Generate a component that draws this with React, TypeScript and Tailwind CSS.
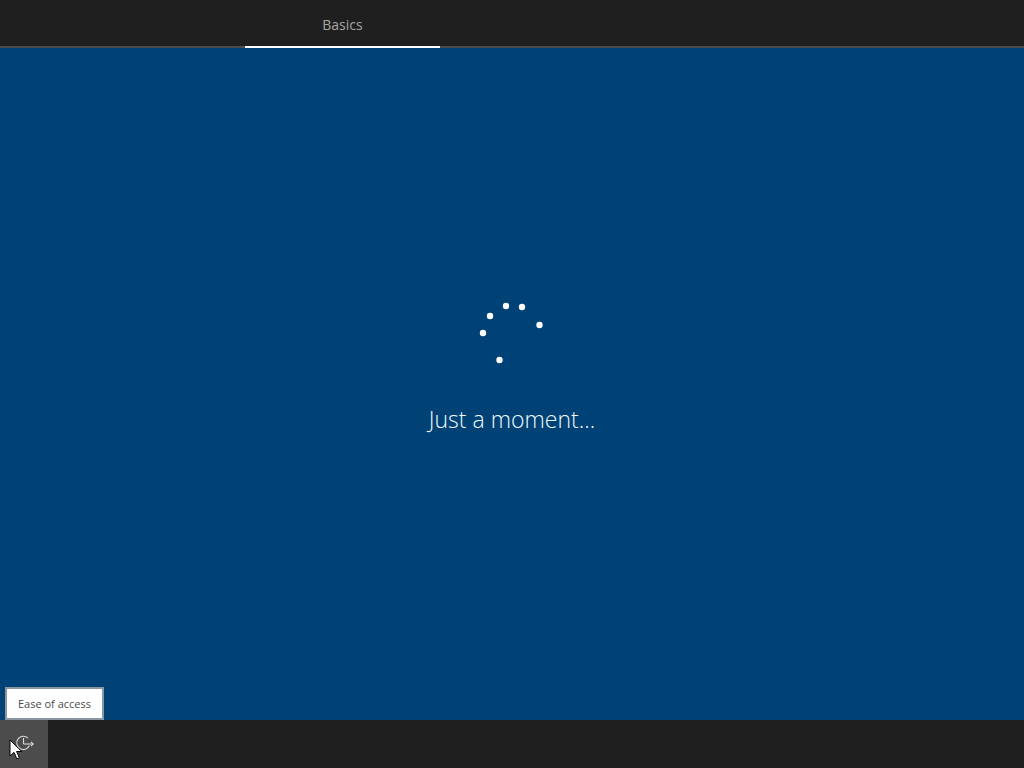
// App.tsx
import React from "react";

const dots = [
  [506, 306],
  [522, 307],
  [539.5, 325],
  [490, 316],
  [483, 333],
  [499.5, 360],
];

const Spinner: React.FC = () => {
  return (
    <svg width="80" height="70" viewBox="472 298 80 70" className="block">
      {dots.map(([cx, cy]) => (
        <circle key={`${cx}-${cy}`} cx={cx} cy={cy} r="3.2" fill="#ffffff" />
      ))}
    </svg>
  );
};

const EaseIcon: React.FC = () => {
  return (
    <svg width="24" height="20" viewBox="0 0 24 20" fill="none" stroke="#d8d8d8" strokeWidth="1.1">
      <path d="M16 4.2A6.6 6.6 0 1 0 17.4 11.5" />
      <path d="M11.5 4v6" />
      <path d="M11.5 10h9.5" />
      <path d="M19 7.8l2.2 2.2-2.2 2.2" />
    </svg>
  );
};

const Cursor: React.FC = () => {
  return (
    <svg width="14" height="21" viewBox="0 0 14 21" className="absolute left-[9px] top-[19px]">
      <path d="M1 1v16l4-3.6 2.8 6.4 2.6-1.1-2.8-6.2h5.2z" fill="#ffffff" stroke="#000000" strokeWidth="1" />
    </svg>
  );
};

const App: React.FC = () => {
  return (
    <div className="flex h-[768px] w-[1024px] flex-col overflow-hidden bg-[#004275] font-['Open_Sans','Noto_Sans',sans-serif]">
      <header className="flex h-[48px] shrink-0 border-b-2 border-[#4c4c4c] bg-[#1f1f1f] pl-[245px]">
        <div className="mb-[-2px] flex h-[48px] w-[195px] items-center justify-center border-b-2 border-white pt-[2px] text-[14px] text-[#a6a6a6]">
          Basics
        </div>
      </header>

      <main className="relative flex flex-1 flex-col items-center pt-[250px]">
        <Spinner />
        <h1 className="mt-[35px] text-[23px] leading-[32px] font-light text-[#f2f8fc]">Just a moment...</h1>
        <div className="absolute bottom-0 left-[5px] flex h-[33px] w-[99px] items-center justify-center border-2 border-[#8a97a3] bg-white pt-[1px] text-[11px] text-[#4a4a4a]">
          Ease of access
        </div>
      </main>

      <footer className="flex h-[48px] shrink-0 bg-[#1f1f1f]">
        <button className="relative flex h-[48px] w-[48px] items-center justify-center bg-[#4c4c4c]">
          <EaseIcon />
          <Cursor />
        </button>
      </footer>
    </div>
  );
};

export default App;
